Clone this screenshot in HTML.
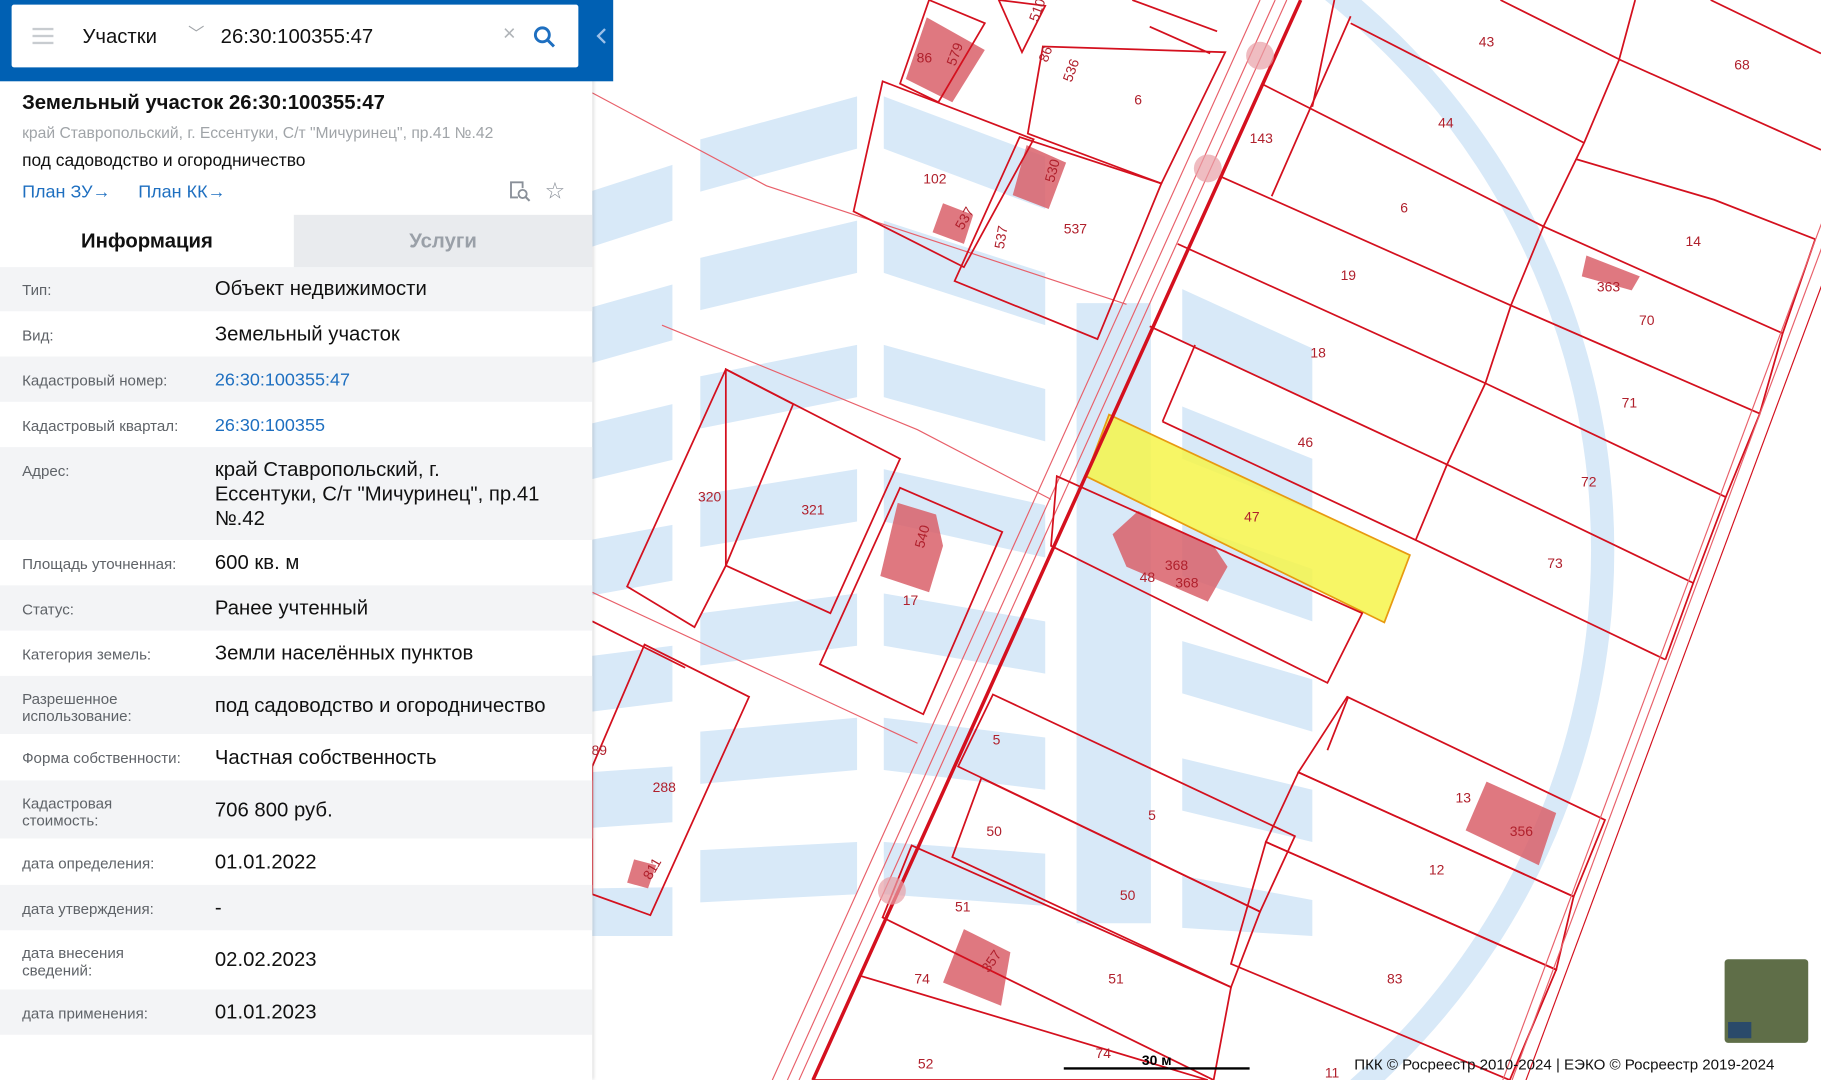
<!DOCTYPE html>
<html><head><meta charset="utf-8">
<style>
html,body{margin:0;padding:0;width:1821px;height:1080px;overflow:hidden;background:#fff;}
#s{position:absolute;left:0;top:0;width:1568px;height:930px;overflow:hidden;transform:scale(1.16135);transform-origin:0 0;font-family:"Liberation Sans",sans-serif;}
#map{position:absolute;left:0;top:0;}
#panel{position:absolute;left:0;top:0;width:510px;height:930px;background:#fff;box-shadow:1px 0 3px rgba(0,0,0,.15);}
#hdr{position:absolute;left:0;top:0;width:528px;height:70px;background:#0060b3;}
#sb{position:absolute;left:10px;top:4px;width:488px;height:54px;background:#fff;border-radius:2px;}
.row{position:absolute;left:0;width:510px;}
.g{background:#f3f4f6;}
.k{position:absolute;left:19px;font-size:13px;color:#5f6368;line-height:15px;}
.v{position:absolute;left:185px;font-size:17.5px;color:#111;line-height:21px;}
.a{color:#1e6fc0;}
</style></head><body><div id="s">
<svg id="map" width="1568" height="930" viewBox="0 0 1568 930">
<circle cx="765" cy="474" r="615" fill="none" stroke="#d8e9f8" stroke-width="20"/>
<g fill="#d8e9f8">
<polygon points="508,165 579,142 579,190 508,213"/>
<polygon points="508,265 579,245 579,293 508,313"/>
<polygon points="508,365 579,348 579,396 508,413"/>
<polygon points="508,465 579,452 579,500 508,513"/>
<polygon points="508,565 579,556 579,604 508,613"/>
<polygon points="508,665 579,660 579,708 508,713"/>
<polygon points="508,765 579,764 579,806 508,806"/>
<polygon points="603,120 738,83 738,128 603,165"/>
<polygon points="603,222 738,190 738,235 603,267"/>
<polygon points="603,324 738,297 738,342 603,369"/>
<polygon points="603,426 738,404 738,449 603,471"/>
<polygon points="603,528 738,511 738,556 603,573"/>
<polygon points="603,630 738,618 738,663 603,675"/>
<polygon points="603,732 738,725 738,770 603,777"/>
<polygon points="761,83 900,135 900,180 761,128"/>
<polygon points="761,190 900,235 900,280 761,235"/>
<polygon points="761,297 900,335 900,380 761,342"/>
<polygon points="761,404 900,435 900,480 761,449"/>
<polygon points="761,511 900,535 900,580 761,556"/>
<polygon points="761,618 900,635 900,680 761,663"/>
<polygon points="761,725 900,735 900,780 761,770"/>
<polygon points="927,261 991,261 991,795 927,795"/>
<polygon points="1018,249 1130,300 1130,345 1018,294"/>
<polygon points="1018,350 1130,395 1130,440 1018,395"/>
<polygon points="1018,451 1130,490 1130,535 1018,496"/>
<polygon points="1018,552 1130,585 1130,630 1018,597"/>
<polygon points="1018,653 1130,680 1130,725 1018,698"/>
<polygon points="1018,754 1130,775 1130,806 1018,799"/>
</g>
<polygon points="955,357 1214,478 1192,536 935,410" fill="#f6f54a" fill-opacity=".85" stroke="#e89a10" stroke-width="1.5"/>
<g fill="#d9606a" fill-opacity=".85">
<polygon points="798,15 848,43 820,88 780,68"/>
<polygon points="884,125 918,140 903,180 872,168"/>
<polygon points="812,175 838,185 830,210 803,200"/>
<polygon points="773,433 806,443 812,470 800,510 758,496"/>
<polygon points="980,440 1045,470 1057,488 1040,518 970,488 958,460"/>
<polygon points="1366,220 1412,238 1405,250 1362,238"/>
<polygon points="1280,673 1340,700 1325,745 1262,715"/>
<polygon points="830,800 870,820 862,866 812,846"/>
<polygon points="546,740 565,745 558,765 540,760"/>
</g>
<g fill="none" stroke="#d4101e" stroke-width="1.5">
<line x1="1120" y1="0" x2="700" y2="930" stroke-width="3"/>
<line x1="1108" y1="0" x2="688" y2="930" stroke-width="1" stroke="#e8606a"/>
<line x1="1098" y1="0" x2="678" y2="930" stroke-width="1" stroke="#e8606a"/>
<line x1="1085" y1="0" x2="665" y2="930" stroke-width="1" stroke="#e8606a"/>
<polyline points="510,80 660,160 970,262" stroke-width="1" stroke="#e8606a"/>
<polyline points="570,280 790,370 905,430" stroke-width="1" stroke="#e8606a"/>
<polyline points="510,510 790,640" stroke-width="1" stroke="#e8606a"/>
<polygon points="800,0 848,20 808,88 775,72"/>
<polygon points="860,0 900,5 880,45"/>
<polygon points="898,40 1055,45 1000,158 885,115"/>
<polygon points="878,118 1000,158 945,292 822,242"/>
<polygon points="760,70 890,120 830,230 735,182"/>
<polygon points="625,318 775,395 715,528 625,487"/>
<polygon points="625,318 683,348 625,487 598,540 540,505"/>
<polygon points="775,420 863,458 795,615 706,572"/>
<polygon points="910,410 1173,528 1143,588 905,470"/>
<polygon points="855,598 1115,720 1085,785 825,660"/>
<polygon points="845,670 1085,785 1060,850 820,738"/>
<polygon points="785,728 1060,850 1045,930 760,790"/>
<polygon points="740,840 1040,930 700,930"/>
<polygon points="1160,600 1382,706 1355,772 1118,665"/>
<polygon points="1118,665 1355,772 1340,835 1090,725"/>
<polygon points="1090,725 1340,835 1300,930 1060,830"/>
<polygon points="555,555 645,600 560,788 510,770 510,660"/>
<line x1="510" y1="535" x2="590" y2="575"/>
<!-- right grid -->
<polyline points="1163,20 1364,123"/>
<polyline points="1357,137 1476,172 1563,206"/>
<polyline points="1088,73 1329,195 1535,287"/>
<polyline points="1051,152 1301,263 1515,356"/>
<polyline points="1014,210 1279,330 1486,428"/>
<polyline points="990,281 1246,400 1458,502"/>
<polyline points="1001,363 1219,465 1434,568"/>
<line x1="1029" y1="297" x2="1001" y2="363"/>
<polyline points="1292,0 1396,52 1568,129"/>
<line x1="1473" y1="0" x2="1568" y2="46"/>
<polyline points="1408,0 1394,52 1364,123 1329,195 1301,263 1279,330 1246,400 1219,465"/>
<line x1="1163" y1="14" x2="1095" y2="169"/>
<line x1="1149" y1="0" x2="1130" y2="92"/>
<polyline points="1563,206 1535,287 1515,357 1486,428 1458,502 1434,568"/>
<line x1="1161" y1="600" x2="1143" y2="646"/>
<line x1="990" y1="23" x2="1042" y2="46"/>
<line x1="975" y1="0" x2="1048" y2="27"/>
<line x1="1640" y1="0" x2="1294" y2="930" stroke-width="1" stroke="#e8606a"/>
<line x1="1648" y1="0" x2="1302" y2="930" stroke-width="1" stroke="#e8606a"/>
<line x1="1660" y1="0" x2="1314" y2="930" stroke-width="1"/>
</g>
<g fill="#e8a0a6" fill-opacity=".7"><circle cx="1085" cy="48" r="12"/><circle cx="1040" cy="145" r="12"/><circle cx="768" cy="767" r="12"/></g>
<g font-family="Liberation Sans,sans-serif" font-size="12" fill="#b0202c" text-anchor="middle">
<text x="980" y="90">6</text><text x="1280" y="40">43</text><text x="1500" y="60">68</text><text x="1245" y="110">44</text><text x="1086" y="123">143</text><text x="1209" y="183">6</text><text x="1458" y="212">14</text><text x="805" y="158">102</text><text x="926" y="201">537</text><text x="1161" y="241">19</text><text x="1418" y="280">70</text><text x="1135" y="308">18</text><text x="1403" y="351">71</text><text x="1124" y="385">46</text><text x="1368" y="419">72</text><text x="1078" y="449">47</text><text x="611" y="432">320</text><text x="700" y="443">321</text><text x="1339" y="489">73</text><text x="988" y="501">48</text><text x="1013" y="491">368</text><text x="1022" y="506">368</text><text x="784" y="521">17</text><text x="858" y="641">5</text><text x="992" y="706">5</text><text x="1260" y="691">13</text><text x="516" y="650">89</text><text x="572" y="682">288</text><text x="856" y="720">50</text><text x="1237" y="753">12</text><text x="971" y="775">50</text><text x="829" y="785">51</text><text x="794" y="847">74</text><text x="961" y="847">51</text><text x="1201" y="847">83</text><text x="797" y="920">52</text><text x="950" y="911">74</text><text x="796" y="54">86</text><text x="1310" y="720">356</text><text x="1385" y="251">363</text><text x="1147" y="928">11</text>
<text transform="translate(826,48) rotate(-70)">579</text>
<text transform="translate(904,48) rotate(-70)">86</text>
<text transform="translate(926,62) rotate(-70)">536</text>
<text transform="translate(897,10) rotate(-70)">510</text>
<text transform="translate(910,148) rotate(-75)">530</text>
<text transform="translate(834,190) rotate(-60)">537</text>
<text transform="translate(866,205) rotate(-80)">537</text>
<text transform="translate(798,463) rotate(-75)">540</text>
<text transform="translate(565,750) rotate(-60)">811</text>
<text transform="translate(857,830) rotate(-55)">357</text>
</g>
<line x1="916" y1="920" x2="1076" y2="920" stroke="#000" stroke-width="2"/>
<text x="996" y="917" font-family="Liberation Sans,sans-serif" font-size="12" font-weight="bold" text-anchor="middle">30 м</text>
<text x="1347" y="921" font-family="Liberation Sans,sans-serif" font-size="13" text-anchor="middle" fill="#111">ПКК © Росреестр 2010-2024 | ЕЭКО © Росреестр 2019-2024</text>
<rect x="1485" y="826" width="72" height="72" rx="3" fill="#5f6e48"/>
<rect x="1488" y="880" width="20" height="14" fill="#2a4a6a"/>
</svg>
<div id="panel">
<div class="row g" style="top:230px;height:38px"></div>
<div class="row g" style="top:307px;height:39px"></div>
<div class="row g" style="top:385px;height:80px"></div>
<div class="row g" style="top:504px;height:39px"></div>
<div class="row g" style="top:582px;height:50px"></div>
<div class="row g" style="top:672px;height:50px"></div>
<div class="row g" style="top:762px;height:39px"></div>
<div class="row g" style="top:852px;height:39px"></div>
<div style="position:absolute;left:19px;top:78px;font-size:17.5px;font-weight:bold;color:#111">Земельный участок 26:30:100355:47</div>
<div style="position:absolute;left:19px;top:107px;font-size:13.5px;color:#a0a4a8">край Ставропольский, г. Ессентуки, С/т "Мичуринец", пр.41 №.42</div>
<div style="position:absolute;left:19px;top:130px;font-size:15px;color:#111">под садоводство и огородничество</div>
<div style="position:absolute;left:19px;top:157px;font-size:15.5px" class="a">План ЗУ→</div>
<div style="position:absolute;left:119px;top:157px;font-size:15.5px" class="a">План КК→</div>
<svg style="position:absolute;left:438px;top:155px" width="20" height="20" viewBox="0 0 20 20"><path d="M8 15H2V2h10v5" fill="none" stroke="#8a9099" stroke-width="1.6"/><circle cx="12" cy="12" r="3.5" fill="none" stroke="#8a9099" stroke-width="1.6"/><line x1="14.5" y1="14.5" x2="18" y2="18" stroke="#8a9099" stroke-width="1.8"/></svg>
<div style="position:absolute;left:469px;top:152px;font-size:20px;color:#8a9099">☆</div>
<div style="position:absolute;left:253px;top:185px;width:257px;height:45px;background:#e9ebee"></div>
<div style="position:absolute;left:0;top:185px;width:253px;height:45px;line-height:45px;text-align:center;font-size:17.5px;font-weight:bold;color:#111">Информация</div>
<div style="position:absolute;left:253px;top:185px;width:257px;height:45px;line-height:45px;text-align:center;font-size:17.5px;font-weight:bold;color:#9aa0a8">Услуги</div>
<div class="k" style="top:242px">Тип:</div><div class="v" style="top:238px">Объект недвижимости</div>
<div class="k" style="top:281px">Вид:</div><div class="v" style="top:277px">Земельный участок</div>
<div class="k" style="top:320px">Кадастровый номер:</div><div class="v a" style="top:317px;font-size:15.5px">26:30:100355:47</div>
<div class="k" style="top:359px">Кадастровый квартал:</div><div class="v a" style="top:356px;font-size:15.5px">26:30:100355</div>
<div class="k" style="top:398px">Адрес:</div><div class="v" style="top:394px">край Ставропольский, г.<br>Ессентуки, С/т "Мичуринец", пр.41<br>№.42</div>
<div class="k" style="top:478px">Площадь уточненная:</div><div class="v" style="top:474px">600 кв. м</div>
<div class="k" style="top:517px">Статус:</div><div class="v" style="top:513px">Ранее учтенный</div>
<div class="k" style="top:556px">Категория земель:</div><div class="v" style="top:552px">Земли населённых пунктов</div>
<div class="k" style="top:594px">Разрешенное<br>использование:</div><div class="v" style="top:597px">под садоводство и огородничество</div>
<div class="k" style="top:645px">Форма собственности:</div><div class="v" style="top:642px">Частная собственность</div>
<div class="k" style="top:684px">Кадастровая<br>стоимость:</div><div class="v" style="top:687px">706 800 руб.</div>
<div class="k" style="top:736px">дата определения:</div><div class="v" style="top:732px">01.01.2022</div>
<div class="k" style="top:775px">дата утверждения:</div><div class="v" style="top:771px">-</div>
<div class="k" style="top:813px">дата внесения<br>сведений:</div><div class="v" style="top:816px">02.02.2023</div>
<div class="k" style="top:865px">дата применения:</div><div class="v" style="top:861px">01.01.2023</div>
</div>
<div id="hdr"><div id="sb">
<div style="position:absolute;left:18px;top:20px;width:18px;height:2px;background:#c8ccd0;box-shadow:0 6px 0 #c8ccd0,0 12px 0 #c8ccd0"></div>
<div style="position:absolute;left:61px;top:17px;font-size:17.5px;color:#111">Участки</div>
<div style="position:absolute;left:152px;top:15px;font-size:14px;color:#a0a4a8">﹀</div>
<div style="position:absolute;left:180px;top:17px;font-size:17.5px;color:#111">26:30:100355:47</div>
<div style="position:absolute;left:423px;top:15px;font-size:19px;color:#b0b4b8">×</div>
<svg style="position:absolute;left:449px;top:18px" width="20" height="20" viewBox="0 0 20 20"><circle cx="8" cy="8" r="6" fill="none" stroke="#1e6fc0" stroke-width="2.5"/><line x1="12.5" y1="12.5" x2="18" y2="18" stroke="#1e6fc0" stroke-width="2.5"/></svg>
</div>
<svg style="position:absolute;left:513px;top:24px" width="10" height="14" viewBox="0 0 10 14"><path d="M8 1L2 7l6 6" fill="none" stroke="#9cc0e8" stroke-width="2"/></svg>
</div>
</div></body></html>
